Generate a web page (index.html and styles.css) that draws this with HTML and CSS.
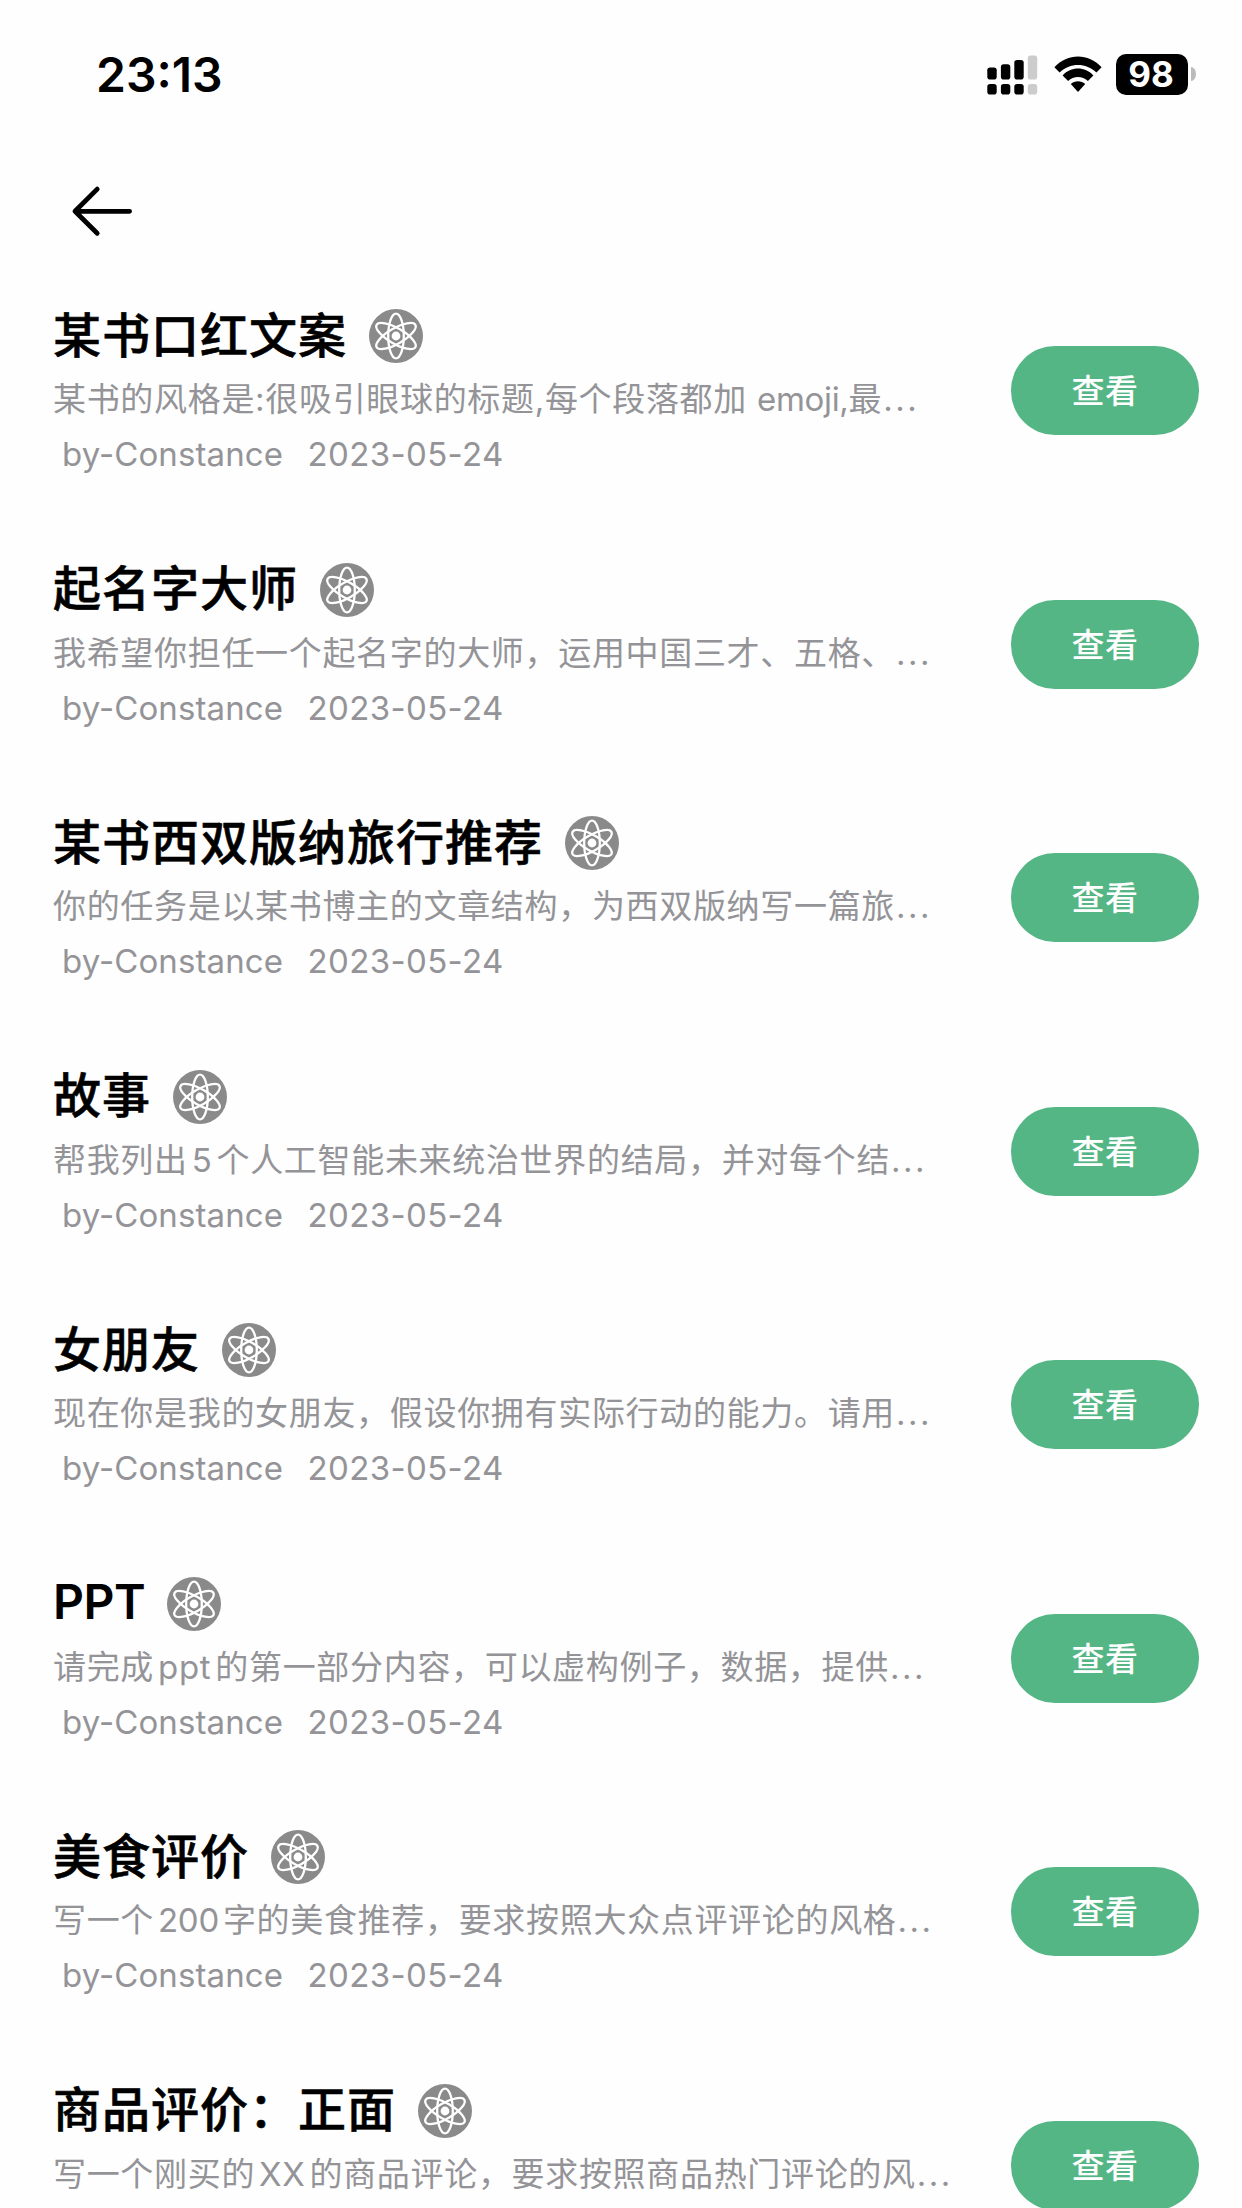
FILE: index.html
```html
<!DOCTYPE html>
<html lang="zh-CN">
<head>
<meta charset="utf-8">
<title>列表</title>
<link rel="stylesheet" href="styles.css">
</head>
<body>
<svg width="0" height="0" class="defs">
  <symbol id="atom" viewBox="-27 -27 54 54">
    <circle r="27" fill="#8a8a8a"/>
    <g fill="none" stroke="#fff" stroke-width="2.3">
      <ellipse rx="7.8" ry="22.4"/>
      <ellipse rx="7.8" ry="22.4" transform="rotate(60)"/>
      <ellipse rx="7.8" ry="22.4" transform="rotate(120)"/>
    </g>
    <circle r="4.4" fill="#fff"/>
  </symbol>
</svg>
<header class="status">
  <span class="time">23:13</span>
  <div class="indicators">
    <svg class="signal" width="51" height="42" viewBox="0 0 51 42">
      <rect x="0.3" y="14.4" width="9.4" height="12.2" rx="2.8"/>
      <rect x="13.9" y="11.2" width="9.4" height="15.4" rx="2.8"/>
      <rect x="27.3" y="7" width="9.4" height="19.6" rx="2.8"/>
      <rect class="off" x="40.8" y="2.4" width="9.4" height="24.2" rx="2.8"/>
      <rect x="0.3" y="31" width="9.4" height="10.6" rx="2.8"/>
      <rect x="13.9" y="31" width="9.4" height="10.6" rx="2.8"/>
      <rect x="27.3" y="31" width="9.4" height="10.6" rx="2.8"/>
      <rect class="off" x="40.8" y="31" width="9.4" height="10.6" rx="2.8"/>
    </svg>
    <svg class="wifi" width="48" height="37" viewBox="0 0 48 37">
      <path d="M0.4 11.2C13.5-3.2 34.5-3.2 47.6 11.2L42.4 16.6C32.2 6.6 15.8 6.6 5.6 16.6Z"/>
      <path d="M8.6 19.4C17.2 10.3 30.8 10.3 39.4 19.4L33.9 25C28.4 19.7 19.6 19.7 14.1 25Z"/>
      <path d="M16.8 28C20.9 24.3 27.1 24.3 31.2 28L24 36Z"/>
    </svg>
    <div class="battery"><span class="cell">98</span><i class="nub"></i></div>
  </div>
</header>
<nav class="nav">
  <svg width="64" height="52" viewBox="0 0 64 52" fill="none" stroke="#000" stroke-width="4.8" stroke-linecap="round" stroke-linejoin="round">
    <path d="M27.2 4.1L5 26.3L27.2 48.3M5 26.3H59.6"/>
  </svg>
</nav>
<main class="list">
  <article class="item"><div class="info">
    <h2 class="title"><span class="name">某书口红文案</span><svg class="icon"><use href="#atom"/></svg></h2>
    <p class="desc">某书的风格是:很吸引眼球的标题,每个段落都加 <span class="tight">emoji,</span>最<span class="dots">...</span></p>
    <p class="meta"><span>by-Constance</span><span class="date">2023-05-24</span></p>
  </div><button class="view">查看</button></article>
  <article class="item"><div class="info">
    <h2 class="title"><span class="name">起名字大师</span><svg class="icon"><use href="#atom"/></svg></h2>
    <p class="desc">我希望你担任一个起名字的大师，运用中国三才、五格、<span class="dots">...</span></p>
    <p class="meta"><span>by-Constance</span><span class="date">2023-05-24</span></p>
  </div><button class="view">查看</button></article>
  <article class="item"><div class="info">
    <h2 class="title"><span class="name">某书西双版纳旅行推荐</span><svg class="icon"><use href="#atom"/></svg></h2>
    <p class="desc">你的任务是以某书博主的文章结构，为西双版纳写一篇旅<span class="dots">...</span></p>
    <p class="meta"><span>by-Constance</span><span class="date">2023-05-24</span></p>
  </div><button class="view">查看</button></article>
  <article class="item"><div class="info">
    <h2 class="title"><span class="name">故事</span><svg class="icon"><use href="#atom"/></svg></h2>
    <p class="desc">帮我列出<span class="mix">5</span>个人工智能未来统治世界的结局，并对每个结<span class="dots">...</span></p>
    <p class="meta"><span>by-Constance</span><span class="date">2023-05-24</span></p>
  </div><button class="view">查看</button></article>
  <article class="item"><div class="info">
    <h2 class="title"><span class="name">女朋友</span><svg class="icon"><use href="#atom"/></svg></h2>
    <p class="desc">现在你是我的女朋友，假设你拥有实际行动的能力。请用<span class="dots">...</span></p>
    <p class="meta"><span>by-Constance</span><span class="date">2023-05-24</span></p>
  </div><button class="view">查看</button></article>
  <article class="item"><div class="info">
    <h2 class="title"><span class="name latin">PPT</span><svg class="icon"><use href="#atom"/></svg></h2>
    <p class="desc">请完成<span class="mix">ppt</span>的第一部分内容，可以虚构例子，数据，提供<span class="dots">...</span></p>
    <p class="meta"><span>by-Constance</span><span class="date">2023-05-24</span></p>
  </div><button class="view">查看</button></article>
  <article class="item"><div class="info">
    <h2 class="title"><span class="name">美食评价</span><svg class="icon"><use href="#atom"/></svg></h2>
    <p class="desc">写一个<span class="mix tight">200</span>字的美食推荐，要求按照大众点评评论的风格<span class="dots">...</span></p>
    <p class="meta"><span>by-Constance</span><span class="date">2023-05-24</span></p>
  </div><button class="view">查看</button></article>
  <article class="item last"><div class="info">
    <h2 class="title"><span class="name">商品评价：正面</span><svg class="icon"><use href="#atom"/></svg></h2>
    <p class="desc">写一个刚买的<span class="mix">XX</span>的商品评论，要求按照商品热门评论的风<span class="dots">...</span></p>
  </div><button class="view">查看</button></article>
</main>
</body>
</html>
```
FILE: styles.css
```css
* { box-sizing: border-box; margin: 0; padding: 0; }
body {
  width: 1242px;
  height: 2208px;
  overflow: hidden;
  display: flex;
  flex-direction: column;
  background: #fefefe;
  color: #000;
  font-family: Inter, "Noto Sans CJK SC", sans-serif;
}
.defs { position: absolute; }
.status {
  flex: none;
  height: 148px;
  padding: 0 46px 0 96px;
  display: flex;
  justify-content: space-between;
  align-items: center;
}
.time { padding-top: 2px; font-size: 48px; font-weight: 600; line-height: 60px; }
.indicators { display: flex; align-items: center; }
.signal { margin-right: 16px; }
.signal .off { fill: #ccc; }
.wifi { margin-right: 14px; }
.battery { display: flex; align-items: center; gap: 3px; }
.cell {
  width: 72px;
  height: 41px;
  padding-right: 2px;
  border-radius: 10px;
  background: #000;
  color: #fff;
  font-size: 35px;
  font-weight: 700;
  line-height: 41px;
  text-align: center;
}
.nub { width: 5px; height: 14px; border-radius: 0 5px 5px 0 / 0 7px 7px 0; background: #bbb; }
.nav { flex: none; height: 154px; padding: 37px 0 0 70px; }
.nav svg { display: block; }
.list { flex: none; height: 1906px; overflow: hidden; padding-left: 53px; padding-right: 43px; }
.item { height: 253.5px; display: flex; justify-content: space-between; align-items: flex-start; }
.item.last { height: 131.5px; }
.info { white-space: nowrap; }
.title {
  height: 64px;
  display: flex;
  align-items: center;
  font-size: 48px;
  font-weight: 500;
  line-height: 64px;
  letter-spacing: 1px;
}
.name { padding-top: 3px; -webkit-text-stroke: 0.6px #000; }
.latin { padding-top: 0; font-weight: 600; letter-spacing: -0.4px; -webkit-text-stroke: 0; }
.icon { width: 54px; height: 54px; margin: 4px 0 0 21.5px; }
.desc {
  height: 66px;
  color: #949498;
  font-size: 33px;
  line-height: 66px;
  letter-spacing: 0.68px;
}
.mix { margin: 0 4px; }
.tight { letter-spacing: -0.3px; }
.dots { margin-left: 1px; letter-spacing: 2.5px; }
.meta {
  display: flex;
  gap: 24.5px;
  padding: 0 0 0 9px;
  color: #949498;
  font-size: 33px;
  line-height: 44px;
  letter-spacing: 0.1px;
}
.date { letter-spacing: 0.35px; }
.view {
  width: 188px;
  height: 89px;
  margin-top: 44px;
  padding-top: 1px;
  border: 0;
  border-radius: 44px;
  background: #55b685;
  color: #fff;
  font: 500 33px/88px Inter, "Noto Sans CJK SC", sans-serif;
  letter-spacing: 0.6px;
}
```
